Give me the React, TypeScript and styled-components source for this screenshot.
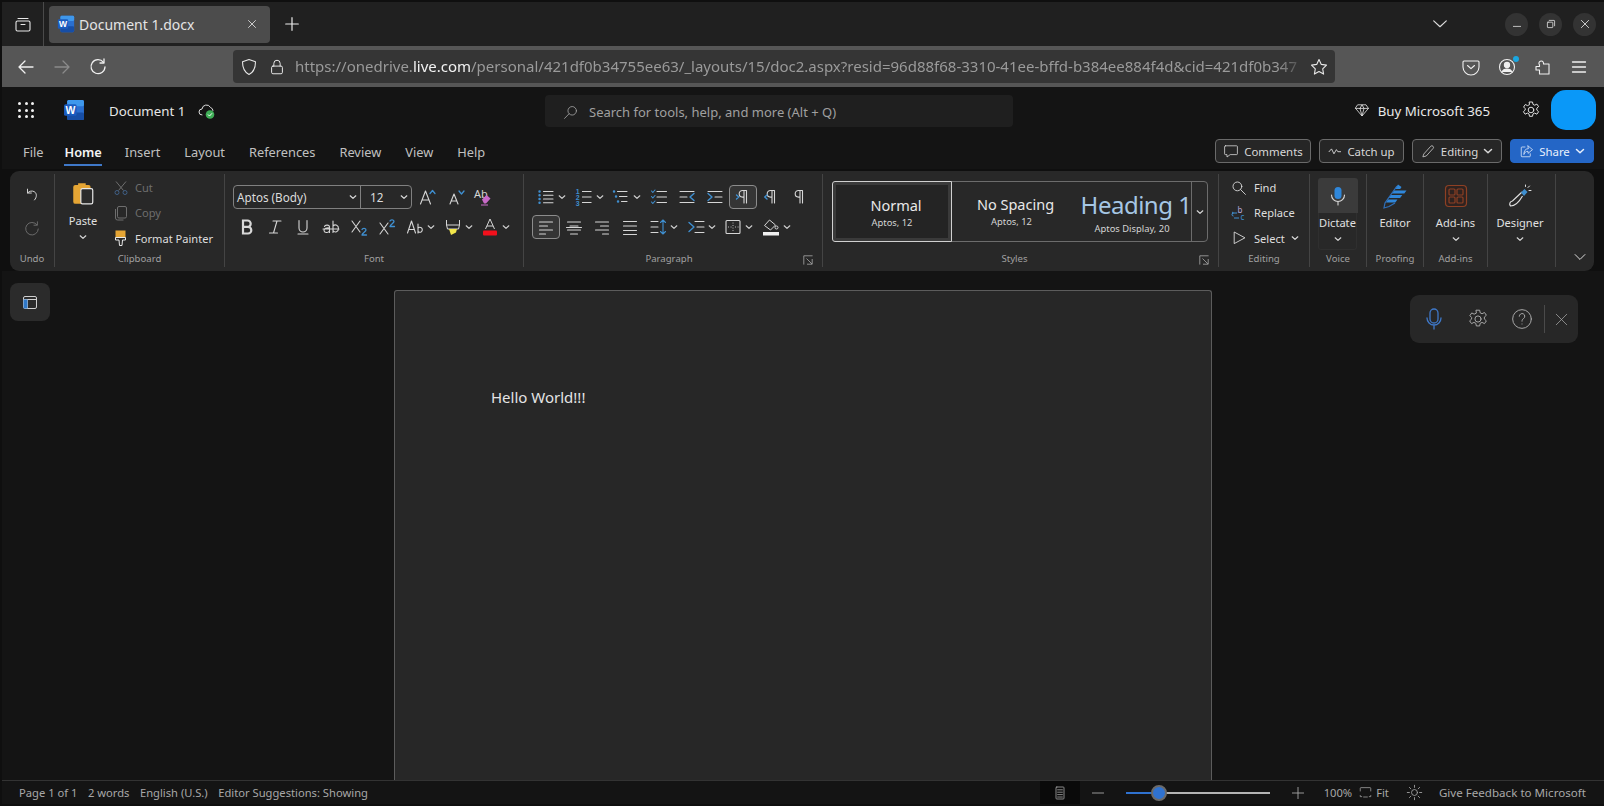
import React from "react";
import styled, { createGlobalStyle } from "styled-components";

const Global = createGlobalStyle`
  html, body { margin: 0; padding: 0; background: #0f0f0f; overflow: hidden; }
  * { box-sizing: border-box; }
  #root { height: 806px; }
`;
const FONT = `"Noto Sans", "Open Sans", sans-serif`;

const Shell = styled.div`
  width: 1604px; height: 806px; padding: 2px 0 2px 2px; background: #0f0f0f;
  display: flex; flex-direction: column; font-family: ${FONT}; color: #d6d6d6; overflow: hidden;
`;
const TabStrip = styled.div`
  height: 44px; background: #202020; display: flex; align-items: center; flex: none;
`;
const TabSideBtn = styled.div`
  width: 42px; height: 44px; border-right: 1px solid #4a4a4a; color: #e8e8e8;
  display: flex; align-items: center; justify-content: center; flex: none;
`;
const Tab = styled.div`
  margin-left: 5px; width: 221px; height: 37px; background: #4c4c4c; border-radius: 4px;
  display: flex; align-items: center; padding: 0 11px 0 8px; gap: 4px; font-size: 14px; color: #e4e4e4;
`;
const TabTitle = styled.span` flex: 1; white-space: nowrap; `;
const NewTab = styled.div`
  margin-left: 11px; width: 22px; height: 22px; color: #eee;
  display: flex; align-items: center; justify-content: center;
`;
const TabStripRight = styled.div`
  margin-left: auto; display: flex; align-items: center; padding-right: 8px; color: #ddd;
`;
const TabListBtn = styled.div` margin-right: 45.5px; display: flex; `;
const WinBtn = styled.div`
  width: 23px; height: 23px; border-radius: 50%; background: #333; margin-left: 11px;
  display: flex; align-items: center; justify-content: center; color: #e6e6e6;
`;
const NavBar = styled.div`
  height: 41px; background: #565656; display: flex; align-items: center; flex: none; color: #eee;
`;
const NavBtn = styled.div<{ $dim?: boolean; $ml: number }>`
  margin-left: ${(p) => p.$ml}px; width: 22px; height: 22px; display: flex; align-items: center; justify-content: center;
  color: ${(p) => (p.$dim ? "#8a8a8a" : "#f0f0f0")}; flex: none;
`;
const UrlBar = styled.div`
  margin-left: 124px; width: 1102px; height: 33px; background: #353535; border-radius: 4px;
  display: flex; align-items: center; padding: 0 4px 0 5px; flex: none;
`;
const UrlIcon = styled.div<{ $w: number }>`
  width: ${(p) => p.$w}px; display: flex; align-items: center; justify-content: center; color: #e8e8e8; flex: none;
`;
const UrlText = styled.div`
  flex: 1; min-width: 0; white-space: nowrap; overflow: hidden; font-size: 15px; color: #9a9a9a; margin: -2px 0 0 1px;
  -webkit-mask-image: linear-gradient(to right, #000 97%, transparent 100%);
  mask-image: linear-gradient(to right, #000 97%, transparent 100%);
`;
const UrlHost = styled.span` color: #f2f2f2; `;
const NavRight = styled.div`
  margin-left: auto; display: flex; align-items: center; padding-right: 14px; gap: 14px;
`;
const NavTool = styled.div`
  width: 22px; height: 22px; display: flex; align-items: center; justify-content: center; color: #f0f0f0; position: relative;
`;
const Dot = styled.span`
  position: absolute; top: 0; right: -1px; width: 6px; height: 6px; border-radius: 50%; background: #1aa6e0;
`;
const AppBar = styled.div`
  height: 46px; background: #141414; display: flex; align-items: center; flex: none;
`;
const Waffle = styled.div`
  margin-left: 16px; width: 16px; height: 16px; display: grid; grid-template-columns: repeat(3, 3px); gap: 3.5px; flex: none;
`;
const WaffleDot = styled.span` width: 3px; height: 3px; border-radius: 50%; background: #f2f2f2; `;
const WordSlot = styled.div` margin-left: 29px; display: flex; flex: none; `;
const DocName = styled.div` margin: 2px 0 0 24px; width: 76px; font-size: 13.3px; color: #e6e6e6; white-space: nowrap; `;
const CloudSlot = styled.div` margin: 2px 0 0 12px; display: flex; width: 20px; flex: none; `;
const SearchBox = styled.div`
  position: relative; margin: 2px 0 0 328px; width: 468px; height: 32px; background: #1f1f1f; border-radius: 4px;
  display: flex; align-items: center; padding: 2px 0 0 17px; gap: 10px; color: #a0a0a0; font-size: 13px; flex: none;
`;
const BuyWrap = styled.div`
  margin-left: auto; display: flex; align-items: center; font-size: 13.3px; color: #e8e8e8; padding-right: 8px;
`;
const BuyLabel = styled.span` margin: 2px 0 0 8px; white-space: nowrap; `;
const GearSlot = styled.div` margin-left: 31px; display: flex; color: #ddd; `;
const Avatar = styled.div`
  margin-left: 10px; width: 45px; height: 40px; border-radius: 15px; background: #0a98f8;
`;
const MenuRow = styled.div`
  height: 36px; margin-bottom: 2px; background: #141414; display: flex; align-items: center; padding: 0 10px 0 21px; flex: none;
`;
const MenuTab = styled.div<{ $active?: boolean; $mr?: number }>`
  position: relative; margin-right: ${(p) => p.$mr ?? 24}px; padding-top: 2px; font-size: 12.8px; white-space: nowrap;
  color: ${(p) => (p.$active ? "#f4f4f4" : "#c0c0c0")}; font-weight: ${(p) => (p.$active ? 600 : 400)};
  ${(p) => p.$active && `&::after { content: ""; position: absolute; left: 0; right: 0; bottom: -5px; height: 2px; background: #3f78c8; }`}
`;
const MenuRight = styled.div` margin-left: auto; display: flex; gap: 8px; `;
const PillBtn = styled.div<{ $w: number; $primary?: boolean }>`
  width: ${(p) => p.$w}px; height: 24px; border-radius: 4px; font-size: 11.4px;
  display: flex; align-items: center; justify-content: center; gap: 5px; white-space: nowrap;
  border: 1px solid ${(p) => (p.$primary ? "#2466c6" : "#6a6a6a")};
  background: ${(p) => (p.$primary ? "#2466c6" : "#262626")}; color: ${(p) => (p.$primary ? "#e8f0fc" : "#d8d8d8")};
`;
const Ribbon = styled.div`
  height: 100px; margin: 0 10px 0 8px; background: #282828; border-radius: 9px; padding: 3px 0 4px;
  display: flex; flex: none;
`;
const Group = styled.div<{ $w: number; $last?: boolean }>`
  width: ${(p) => p.$w}px; height: 93px; flex: none; display: flex; flex-direction: column;
  border-right: ${(p) => (p.$last ? "none" : "1px solid #444")}; position: relative;
`;
const GroupBody = styled.div` flex: 1; min-height: 0; display: flex; `;
const GroupLabel = styled.div<{ $pr?: number }>`
  height: 16px; line-height: 16px; font-size: 9.6px; color: #a0a0a0; text-align: center; white-space: nowrap;
  padding-right: ${(p) => p.$pr ?? 0}px;
`;
const Launcher = styled.div`
  position: absolute; right: 8px; bottom: 1px; display: flex; color: #b8b8b8;
`;
const Stack = styled.div<{ $pl?: number }>`
  display: flex; flex-direction: column; padding-left: ${(p) => p.$pl ?? 0}px; padding-top: 1px;
`;
const UndoCol = styled.div`
  width: 100%; display: flex; flex-direction: column; align-items: center; padding-top: 12px; gap: 16px;
`;
const RedoGlyph = styled.span` color: #6a6a6a; display: flex; `;
const CmdRow = styled.div<{ $dim?: boolean }>`
  height: 26px; display: flex; align-items: center; gap: 6px; font-size: 11.1px; white-space: nowrap;
  color: ${(p) => (p.$dim ? "#6e6e6e" : "#dedede")};
`;
const CmdIcon = styled.span<{ $w: number }>`
  width: ${(p) => p.$w}px; display: flex; justify-content: center; flex: none;
`;
const BigBtn = styled.div<{ $w: number; $frame?: boolean }>`
  width: ${(p) => p.$w}px; display: flex; flex-direction: column; align-items: center; padding-top: 5px; flex: none;
  font-size: 11.1px; color: #e0e0e0; white-space: nowrap; position: relative;
  ${(p) => p.$frame && `&::after { content: ""; position: absolute; left: 8px; right: 8px; top: 39px; height: 36px; border: 1px solid #2f2f2f; border-top: none; border-radius: 0 0 3px 3px; pointer-events: none; }`}
`;
const BigIcon = styled.div<{ $hover?: boolean }>`
  width: 40px; height: 35px; margin-top: -1px; margin-bottom: 1px; border-radius: 3px 3px 0 0; display: flex; align-items: center; justify-content: center;
  background: ${(p) => (p.$hover ? "#3b3b3b" : "transparent")};
`;
const PasteGlyph = styled.svg` margin-top: -5px; `;
const BigLabel = styled.div<{ $mt?: number }>` height: 16px; line-height: 16px; margin-top: ${(p) => p.$mt ?? 1}px; `;
const BigChev = styled.div` height: 12px; margin-top: 2px; display: flex; align-items: center; color: #d8d8d8; `;
const ToolRows = styled.div<{ $pl: number }>`
  padding: 11px 0 0 ${(p) => p.$pl}px; display: flex; flex-direction: column; gap: 6px;
`;
const ToolRow = styled.div` height: 24px; display: flex; align-items: center; `;
const Tool = styled.div<{ $active?: boolean; $w?: number }>`
  width: ${(p) => p.$w ?? 28}px; height: 24px; flex: none; display: flex; align-items: center; justify-content: center;
  border-radius: 4px; color: #d6d6d6;
  ${(p) => p.$active && `border: 1px solid #8c8c8c; background: #353535;`}
`;
const ToolChev = styled.div`
  width: 10px; margin: 0 2.7px 0 -3px; display: flex; justify-content: center; color: #d0d0d0; flex: none;
`;
const FontCombo = styled.div`
  width: 179px; height: 24px; border: 1px solid #808080; border-radius: 4px; display: flex; font-size: 11.7px; color: #dcdcdc; margin-right: 1px; flex: none;
`;
const FontName = styled.div`
  width: 127px; border-right: 1px solid #808080; display: flex; align-items: center; justify-content: space-between; padding: 0 3px 0 3px; white-space: nowrap;
`;
const FontSize = styled.div`
  flex: 1; display: flex; align-items: center; justify-content: space-between; padding: 0 3px 0 9px;
`;
const Gallery = styled.div`
  margin: 7px 0 0 9px; width: 376px; height: 61px; border: 1px solid #6c6c6c; border-radius: 4px; display: flex; flex: none;
`;
const StyleCell = styled.div<{ $w: number; $sel?: boolean; $pt?: number; $pl?: number }>`
  width: ${(p) => p.$w}px; height: ${(p) => (p.$sel ? "61px" : "59px")}; flex: none; display: flex; flex-direction: column; align-items: center;
  padding: ${(p) => p.$pt ?? 12}px 0 0 ${(p) => p.$pl ?? 0}px; white-space: nowrap;
  ${(p) => p.$sel && `margin: -1px 0 0 -1px; border: 1px solid #d0d0d0; border-radius: 3px 0 0 3px; background: #242424; box-shadow: inset 0 0 0 3px #3a3a3a;`}
`;
const StyleName = styled.div<{ $heading?: boolean }>`
  margin-left: 8px; font-size: ${(p) => (p.$heading ? "24px" : "14.5px")}; line-height: ${(p) => (p.$heading ? "32px" : "20px")};
  letter-spacing: ${(p) => (p.$heading ? "-.5px" : "0")};
  color: ${(p) => (p.$heading ? "#a5c6e4" : "#e8e8e8")};
`;
const StyleSub = styled.div` font-size: 9.4px; line-height: 14px; color: #d4d4d4; margin-top: 1px; `;
const GalleryMore = styled.div`
  flex: 1; border-left: 1px solid #6c6c6c; display: flex; align-items: center; justify-content: center; color: #d8d8d8;
`;
const CollapseSlot = styled.div`
  position: absolute; right: 8px; bottom: 3px; display: flex; color: #e0e0e0;
`;
const Workspace = styled.div`
  flex: 1; min-height: 0; background: #141414; display: grid; grid-template-columns: 1fr 818px 1fr; overflow: hidden;
`;
const LeftRail = styled.div` padding: 12px 0 0 8px; `;
const RailBtn = styled.div`
  width: 40px; height: 38px; border-radius: 8px; background: #2b2b2b; display: flex; align-items: center; justify-content: center;
`;
const PageSheet = styled.div`
  margin-top: 19px; background: #272727; border: 1px solid #5c5c5c; border-bottom: none; border-radius: 3px 3px 0 0;
  padding: 95px 96px 0; font-size: 15px; line-height: 22px; color: #e4e4e4;
`;
const RightRail = styled.div` display: flex; justify-content: flex-end; align-items: flex-start; padding: 24px 26px 0 0; `;
const DictBar = styled.div`
  width: 168px; height: 48px; border-radius: 9px; background: #272727; display: flex; align-items: center; padding-left: 10px; color: #a8a8a8;
`;
const DictIcon = styled.div<{ $w: number }>` width: ${(p) => p.$w}px; display: flex; justify-content: center; flex: none; `;
const DictSep = styled.div` width: 1px; height: 28px; background: #4a4a4a; margin: 0 7px 0 1px; flex: none; `;
const StatusBar = styled.div`
  height: 24px; flex: none; background: #141414; border-top: 1px solid #333; display: flex; align-items: center; font-size: 11.2px; color: #a8a8a8; padding-left: 17px; white-space: nowrap;
`;
const StatusItem = styled.span<{ $mr?: number }>` margin-right: ${(p) => p.$mr ?? 10.5}px; `;
const StatusRight = styled.div` margin-left: auto; display: flex; align-items: center; height: 100%; padding-right: 18px; `;
const FeedbackText = styled.span` font-size: 11.6px; `;
const ViewBtn = styled.div`
  width: 40px; height: 100%; background: #0a0a0a; display: flex; align-items: center; justify-content: center; margin-right: 10px;
`;
const ZoomTrack = styled.div`
  position: relative; width: 144px; height: 2px; background: #b4b4b4; margin: 0 20px;
`;
const ZoomFill = styled.div` position: absolute; left: 0; top: 0; height: 2px; width: 33px; background: #2f72d0; `;
const ZoomThumb = styled.div`
  position: absolute; left: 25px; top: -7px; width: 16px; height: 16px; border-radius: 50%; background: #2f72d0; border: 2px solid #6a6a6a;
`;
const StatusIcon = styled.div<{ $mr: number }>` margin-right: ${(p) => p.$mr}px; display: flex; `;

/* --- icons --- */
const S = ({ s = 20, w = 1.1, children }: { s?: number; w?: number; children: React.ReactNode }) => (
  <svg width={s} height={s} viewBox="0 0 20 20" fill="none" stroke="currentColor" strokeWidth={w} strokeLinecap="round" strokeLinejoin="round">
    {children}
  </svg>
);
const BLUE = "#3f8fd0";
const Chev = ({ s = 8 }: { s?: number }) => (
  <svg width={s} height={s} viewBox="0 0 8 8" fill="none" stroke="currentColor" strokeWidth={1.2} strokeLinecap="round" strokeLinejoin="round">
    <path d="M1.2 2.8 4 5.4 6.8 2.8" />
  </svg>
);
const WordLogo = ({ s = 21 }: { s?: number }) => (
  <svg width={s} height={s} viewBox="0 0 21 21">
    <rect x="4" y="1" width="16" height="19" rx="1.5" fill="#2a6fd0" />
    <rect x="4" y="1" width="16" height="6" rx="1.5" fill="#3f98ec" />
    <rect x="4" y="13" width="16" height="7" rx="1.5" fill="#174ea6" />
    <rect x="1" y="5" width="12" height="11" rx="1.5" fill="#1b5cc0" />
    <text x="7" y="14" textAnchor="middle" fontSize="10" fontWeight="700" fill="#fff" fontFamily="Liberation Sans, sans-serif">W</text>
  </svg>
);
const ChevLines = ({ d, blue }: { d: string; blue?: string }) => (
  <S>
    <path d={d} />
    {blue && <path d={blue} stroke={BLUE} strokeWidth={1.4} />}
  </S>
);
const Pilcrow = ({ arrow }: { arrow?: string }) => (
  <S>
    <path d="M13 3.5H9.5a3.2 3.2 0 0 0 0 6.6H11M11 3.5V16M13.5 3.5V16" />
    {arrow && <path d={arrow} stroke={BLUE} strokeWidth={1.4} />}
  </S>
);
const GEAR = "M8.500 2h3l.5 2.400 1.700.8 2.200-1.100 1.700 2.500-1.800 1.600v1.900l1.800 1.600-1.700 2.500-2.200-1.100-1.700.8-.5 2.400h-3l-.5-2.400-1.700-.8-2.200 1.100-1.700-2.500 1.800-1.600V8.600L2.600 7 4.300 4.500l2.200 1.100 1.700-.8z";

export default function App() {
  return (
    <>
      <Global />
      <Shell>
        <TabStrip>
          <TabSideBtn>
            <S>
              <rect x="3" y="7" width="14" height="10" rx="1.5" />
              <path d="M5 4.5h10M8 10.5h4" />
            </S>
          </TabSideBtn>
          <Tab>
            <WordLogo s={18} />
            <TabTitle>Document 1.docx</TabTitle>
            <S s={14} w={1.2}><path d="M5 5l10 10M15 5 5 15" /></S>
          </Tab>
          <NewTab><S s={18} w={1.3}><path d="M10 3v14M3 10h14" /></S></NewTab>
          <TabStripRight>
            <TabListBtn><S s={18} w={1.3}><path d="M3 6.5 10 13l7-6.5" /></S></TabListBtn>
            <WinBtn><S s={12} w={1.3}><path d="M4 14h12" /></S></WinBtn>
            <WinBtn><S s={12} w={1.3}><rect x="4" y="7" width="9" height="9" rx="1" /><path d="M7 4h8a1 1 0 0 1 1 1v8" /></S></WinBtn>
            <WinBtn><S s={12} w={1.4}><path d="M4 4l12 12M16 4 4 16" /></S></WinBtn>
          </TabStripRight>
        </TabStrip>

        <NavBar>
          <NavBtn $ml={13}><S w={1.3}><path d="M17 10H3.500M9 4l-6 6 6 6" /></S></NavBtn>
          <NavBtn $ml={14} $dim><S w={1.3}><path d="M3 10h13.500M11 4l6 6-6 6" /></S></NavBtn>
          <NavBtn $ml={14}><S w={1.3}><path d="M15.500 5.300A7 7 0 1 0 17 10" /><path d="M16 2v4h-4" /></S></NavBtn>
          <UrlBar>
            <UrlIcon $w={22}><S><path d="M10 2.500 3.500 4.800c0 5 1 10 6.500 12.700 5.500-2.700 6.500-7.700 6.500-12.700z" /></S></UrlIcon>
            <UrlIcon $w={34}><S s={18}><rect x="4" y="9" width="12" height="8.500" rx="1.500" /><path d="M6.500 9V6a3.500 3.500 0 0 1 7 0v3" /></S></UrlIcon>
            <UrlText>https://onedrive.<UrlHost>live.com</UrlHost>/personal/421df0b34755ee63/_layouts/15/doc2.aspx?resid=96d88f68-3310-41ee-bffd-b384ee884f4d&amp;cid=421df0b347</UrlText>
            <UrlIcon $w={24}><S><path d="m10 2.500 2.300 4.900 5.200.7-3.800 3.700.9 5.300-4.600-2.600-4.600 2.600.9-5.300-3.800-3.700 5.200-.7z" /></S></UrlIcon>
          </UrlBar>
          <NavRight>
            <NavTool><S><path d="M3 4h14a1 1 0 0 1 1 1v5a8 8 0 0 1-16 0V5a1 1 0 0 1 1-1z" /><path d="m6.500 8.500 3.500 3.200 3.500-3.200" /></S></NavTool>
            <NavTool>
              <S><circle cx="10" cy="10" r="7.500" /><circle cx="10" cy="8" r="2.600" fill="currentColor" /><path d="M5 15c1-2.500 3-3 5-3s4 .5 5 3" fill="currentColor" /></S>
              <Dot />
            </NavTool>
            <NavTool><S><path d="M3 9.500h3.500V7.800A2.300 2.300 0 1 1 10.500 6v1h5.500v10H6.500v-4H3z" /></S></NavTool>
            <NavTool><S w={1.3}><path d="M3.500 5h13M3.500 10h13M3.500 15h13" /></S></NavTool>
          </NavRight>
        </NavBar>

        <AppBar>
          <Waffle>{Array.from({ length: 9 }).map((_, i) => <WaffleDot key={i} />)}</Waffle>
          <WordSlot><WordLogo s={22} /></WordSlot>
          <DocName>Document 1</DocName>
          <CloudSlot>
            <svg width="20" height="20" viewBox="0 0 20 20" fill="none">
              <path d="M5 14a3 3 0 0 1 0-6 4.500 4.500 0 0 1 8.500-1.500A3.500 3.500 0 0 1 16 9.500" stroke="#ddd" strokeWidth="1" strokeLinecap="round" />
              <circle cx="13" cy="13.500" r="4.300" fill="#3fae57" />
              <path d="m11 13.500 1.500 1.500 2.500-2.700" stroke="#fff" strokeWidth="1" />
            </svg>
          </CloudSlot>
          <SearchBox>
            <S s={17} w={1}><circle cx="12" cy="8" r="5" /><path d="M8.300 11.500 3 17" /></S>
            Search for tools, help, and more (Alt + Q)
          </SearchBox>
          <BuyWrap>
            <S s={16} w={1}><path d="M5 3.500h10l3 4.500-8 9.500L2 8zM2 8h16M7.500 8 10 17.500 12.500 8l-2.500-4.500L7.500 8" /></S>
            <BuyLabel>Buy Microsoft 365</BuyLabel>
            <GearSlot><S w={1}><circle cx="10" cy="10" r="2.800" /><path d={GEAR} /></S></GearSlot>
            <Avatar />
          </BuyWrap>
        </AppBar>

        <MenuRow>
          <MenuTab $mr={21}>File</MenuTab>
          <MenuTab $active $mr={23}>Home</MenuTab>
          <MenuTab>Insert</MenuTab>
          <MenuTab>Layout</MenuTab>
          <MenuTab>References</MenuTab>
          <MenuTab>Review</MenuTab>
          <MenuTab>View</MenuTab>
          <MenuTab>Help</MenuTab>
          <MenuRight>
            <PillBtn $w={96}><S s={16} w={1}><path d="M3 3.500h14a1 1 0 0 1 1 1v9a1 1 0 0 1-1 1H9l-4 3v-3H3a1 1 0 0 1-1-1v-9a1 1 0 0 1 1-1z" /></S>Comments</PillBtn>
            <PillBtn $w={85}><S s={14} w={1.3}><path d="M1.500 11 5 7l3.500 7 3.500-6 2 3h4" /></S>Catch up</PillBtn>
            <PillBtn $w={90}><S s={15} w={1}><path d="m4 13 9-10a2 2 0 0 1 3 3L7 16l-4 1z" /></S>Editing <Chev s={10} /></PillBtn>
            <PillBtn $w={84} $primary><S s={15} w={1}><path d="M8 4H4a1 1 0 0 0-1 1v11a1 1 0 0 0 1 1h10a1 1 0 0 0 1-1v-3M12 2.500l6 5-6 5V9.800C9 9.800 7.500 11 6.500 14c0-5 2-7.500 5.500-7.800z" /></S>Share <Chev s={10} /></PillBtn>
          </MenuRight>
        </MenuRow>

        <Ribbon>
          <Group $w={45}>
            <GroupBody>
              <UndoCol>
                <S s={18}><path d="M5 3.500v4.300h4.300" /><path d="M5.200 7.700C7 5.500 10 5 12.500 6.300c3 1.700 3.200 6 .3 9.200" /></S>
                <RedoGlyph>
                  <S s={18}><path d="M15.500 5.300A7 7 0 1 0 17 10" /><path d="M16 2v3.800h-3.800" /></S>
                </RedoGlyph>
              </UndoCol>
            </GroupBody>
            <GroupLabel>Undo</GroupLabel>
          </Group>

          <Group $w={170}>
            <GroupBody>
              <BigBtn $w={56}>
                <BigIcon>
                  <PasteGlyph width="26" height="26" viewBox="0 0 24 24" fill="none">
                    <path d="M3 6.500a2 2 0 0 1 2-2h2.500V3h7v1.500H17a2 2 0 0 1 2 2V8H11v14H5a2 2 0 0 1-2-2z" fill="#e5a534" />
                    <rect x="10" y="8" width="11" height="14" rx="1.500" fill="#2b2b2b" stroke="#e8e8e8" strokeWidth="1.100" />
                  </PasteGlyph>
                </BigIcon>
                <BigLabel $mt={-1}>Paste</BigLabel>
                <BigChev><Chev /></BigChev>
              </BigBtn>
              <Stack $pl={2}>
                <CmdRow $dim>
                  <CmdIcon $w={16}>
                    <svg width="16" height="16" viewBox="0 0 16 16" fill="none" strokeWidth="1">
                      <path d="M3 1.500 10.500 10.500M13 1.500 5.500 10.500" stroke="#6e6e6e" />
                      <circle cx="4" cy="12.500" r="2" stroke="#3f5f86" />
                      <circle cx="12" cy="12.500" r="2" stroke="#3f5f86" />
                    </svg>
                  </CmdIcon>
                  Cut
                </CmdRow>
                <CmdRow $dim>
                  <CmdIcon $w={16}>
                    <svg width="16" height="16" viewBox="0 0 16 16" fill="none" stroke="#6e6e6e">
                      <rect x="4.500" y="1.500" width="9" height="11.500" rx="1.500" />
                      <path d="M2.500 4v9a2 2 0 0 0 2 2h6" />
                    </svg>
                  </CmdIcon>
                  Copy
                </CmdRow>
                <CmdRow>
                  <CmdIcon $w={16}>
                    <svg width="16" height="18" viewBox="0 0 16 18" fill="none">
                      <rect x="2.500" y="1.500" width="10" height="7" fill="#e5a534" />
                      <path d="M2.500 8.500h10v2.500H9.500l-.5 5.500H6.500L6 11H2.500z" stroke="#e8e8e8" strokeWidth="1" />
                    </svg>
                  </CmdIcon>
                  Format Painter
                </CmdRow>
              </Stack>
            </GroupBody>
            <GroupLabel>Clipboard</GroupLabel>
          </Group>

          <Group $w={299}>
            <GroupBody>
              <ToolRows $pl={8}>
                <ToolRow>
                  <FontCombo>
                    <FontName>Aptos (Body)<Chev /></FontName>
                    <FontSize>12<Chev /></FontSize>
                  </FontCombo>
                  <Tool>
                    <S><path d="M3.500 17 8.500 4l5 13M5 13h7" /><path d="m13 6.500 2.500-3 2.500 3" stroke={BLUE} strokeWidth={1.3} /></S>
                  </Tool>
                  <Tool $w={29}>
                    <S><path d="M4 17 8 7l4 10M5.300 14h5.400" /><path d="m13 4 2.500 3L18 4" stroke={BLUE} strokeWidth={1.3} /></S>
                  </Tool>
                  <Tool $w={26}>
                    <svg width="20" height="20" viewBox="0 0 20 20" fill="none">
                      <text x="1" y="11" fontSize="11" fill="#d6d6d6" fontFamily="Noto Sans, sans-serif">Ab</text>
                      <path d="m9 12.500 4.500-4.500 4 3.500-4.500 5H11z" fill="#c86ac8" />
                      <path d="M8 18h7" stroke="#c86ac8" />
                    </svg>
                  </Tool>
                </ToolRow>
                <ToolRow>
                  <Tool><svg width="20" height="20" viewBox="0 0 20 20" fill="none" stroke="#d8d8d8" strokeWidth="2.200"><path d="M6 3.500v13h5a3.300 3.300 0 0 0 0-6.600H6h4.500a3.200 3.200 0 0 0 0-6.400z" /></svg></Tool>
                  <Tool><S><path d="M8 4h8M4.500 16h8M12 4 8.500 16" /></S></Tool>
                  <Tool><S><path d="M6 3.500V11a4 4 0 0 0 8 0V3.500M5 17h10" /></S></Tool>
                  <Tool>
                    <S><path d="M2 12h16M3.500 9.500c.5-1.800 5-2 5 .5v5.500M8.500 11c-3-.5-5.500.5-5.500 2.500s4 3 5.500 .5M12 4v11.500M12 9c2.500-2.500 5.500-.5 5.500 2.500s-3.500 5-5.500 2" /></S>
                  </Tool>
                  <Tool>
                    <S><path d="m3 4 8 11M11 4 3 15" /><path d="M13 12.500c.5-1.500 4-1.500 4 .5 0 1.500-4 3-4 5h4.500" stroke={BLUE} strokeWidth={1.3} /></S>
                  </Tool>
                  <Tool>
                    <S><path d="m3 6 8 11M11 6 3 17" /><path d="M13 4c.5-1.500 4-1.500 4 .5 0 1.500-4 3-4 5h4.500" stroke={BLUE} strokeWidth={1.3} /></S>
                  </Tool>
                  <Tool>
                    <S><path d="M2.500 16 6.500 4l4 12M4 12.500h5" /><path d="M13 7v9M13 11a2.500 2.500 0 1 1 0 3.500" /></S>
                  </Tool>
                  <ToolChev><Chev /></ToolChev>
                  <Tool>
                    <svg width="20" height="20" viewBox="0 0 20 20" fill="none">
                      <path d="M3.500 3v5h13V3M3.500 8l1 4h11l1-4" stroke="#d6d6d6" />
                      <path d="M6 12h8l-1 3.500-5 2.500z" fill="#f2e64a" />
                    </svg>
                  </Tool>
                  <ToolChev><Chev /></ToolChev>
                  <Tool>
                    <svg width="20" height="20" viewBox="0 0 20 20" fill="none">
                      <path d="M5.500 12 10 2l4.500 10M7 9h6" stroke="#d6d6d6" />
                      <rect x="3" y="13.500" width="14" height="5" rx="1" fill="#f2101c" />
                    </svg>
                  </Tool>
                  <ToolChev><Chev /></ToolChev>
                </ToolRow>
              </ToolRows>
            </GroupBody>
            <GroupLabel>Font</GroupLabel>
          </Group>

          <Group $w={299}>
            <GroupBody>
              <ToolRows $pl={8}>
                <ToolRow>
                  <Tool><S><path d="M7.500 4.500H17M7.500 8.300H17M7.500 12H17M7.500 15.700H17" /><path d="M3.500 4.500h.1M3.500 8.300h.1M3.500 12h.1M3.500 15.700h.1" stroke={BLUE} strokeWidth={2.4} /></S></Tool>
                  <ToolChev><Chev /></ToolChev>
                  <Tool>
                    <svg width="20" height="20" viewBox="0 0 20 20" fill="none">
                      <path d="M8 4.500h9.500M8 10h9.500M8 15.500h9.500" stroke="#d6d6d6" />
                      <text x="3.800" y="7" fontSize="7" textAnchor="middle" fontWeight="700" fill={BLUE} fontFamily="Liberation Sans, sans-serif">1</text>
                      <text x="3.800" y="13" fontSize="7" textAnchor="middle" fontWeight="700" fill={BLUE} fontFamily="Liberation Sans, sans-serif">2</text>
                      <text x="3.800" y="19" fontSize="7" textAnchor="middle" fontWeight="700" fill={BLUE} fontFamily="Liberation Sans, sans-serif">3</text>
                    </svg>
                  </Tool>
                  <ToolChev><Chev /></ToolChev>
                  <Tool><S><path d="M6.500 4.500H16M8.500 9.500H16M10.500 14.500H16" /><path d="M3 4.500h.1M5 9.500h.1M7 14.500h.1" stroke={BLUE} strokeWidth={2.4} /></S></Tool>
                  <ToolChev><Chev /></ToolChev>
                  <Tool><S><path d="M8 4.500h9.500M8 10h9.500M8 15.500h9.500" /><path d="m2.500 4 1.300 1.500L6 3M2.500 9.500 3.800 11 6 8.500M2.500 15l1.300 1.500L6 14" stroke={BLUE} /></S></Tool>
                  <Tool><ChevLines d="M3 4.500h14M3 10h7M3 15.500h14" blue="M17 6.500 13 10l4 3.500" /></Tool>
                  <Tool><ChevLines d="M3 4.500h14M10 10h7M3 15.500h14" blue="M3 6.500 7 10l-4 3.500" /></Tool>
                  <Tool $active><Pilcrow arrow="m3.500 8 2.300 2-2.300 2" /></Tool>
                  <Tool><Pilcrow arrow="M6 8 3.700 10 6 12" /></Tool>
                  <Tool><Pilcrow /></Tool>
                </ToolRow>
                <ToolRow>
                  <Tool $active><S><path d="M3.500 5h13M3.500 9h8M3.500 13h13M3.500 17h6" /></S></Tool>
                  <Tool><S><path d="M3.500 5h13M6 9h8M2.500 10.500h15M3.500 13h13M6.500 17h7" /></S></Tool>
                  <Tool><S><path d="M3.500 5h13M8.500 9h8M3.500 13h13M10.500 17h6" /></S></Tool>
                  <Tool><S><path d="M3.500 4.500h13M3.500 9h13M3.500 13.500h13M3.500 17.500h13" /></S></Tool>
                  <Tool><S><path d="M3 4.500h7M3 10h7M3 15.500h7" /><path d="M15 3v14M12.500 5.500 15 3l2.500 2.500M12.500 14.500 15 17l2.500-2.500" stroke={BLUE} /></S></Tool>
                  <ToolChev><Chev /></ToolChev>
                  <Tool><ChevLines d="M9 4.500h9M11 10h7M9 15.500h9" blue="M3 5.500 8 10l-5 4.500" /></Tool>
                  <ToolChev><Chev /></ToolChev>
                  <Tool>
                    <S><rect x="3" y="3.500" width="14" height="13" rx="1" /><path d="M10 6v.1M10 8.500v.1M10 11v.1M10 13.500v.1M5.500 10h.1M8 10h.1M12.500 10h.1M15 10h.1" strokeWidth={.9} /></S>
                  </Tool>
                  <ToolChev><Chev /></ToolChev>
                  <Tool>
                    <svg width="20" height="20" viewBox="0 0 20 20" fill="none">
                      <path d="m3.500 8.500 5-5.500 6 5-5 5z" stroke="#d6d6d6" />
                      <circle cx="15.500" cy="10.500" r="1.500" stroke="#d6d6d6" />
                      <rect x="2" y="15" width="16" height="3.500" fill="#f0f0f0" />
                    </svg>
                  </Tool>
                  <ToolChev><Chev /></ToolChev>
                </ToolRow>
              </ToolRows>
            </GroupBody>
            <GroupLabel $pr={8}>Paragraph</GroupLabel>
            <Launcher><S s={12} w={1.2}><path d="M3 17V3h14M17 9v8H9M8 8l8 8" /></S></Launcher>
          </Group>

          <Group $w={396}>
            <GroupBody>
              <Gallery>
                <StyleCell $w={120} $sel $pt={13}>
                  <StyleName>Normal</StyleName>
                  <StyleSub>Aptos, 12</StyleSub>
                </StyleCell>
                <StyleCell $w={119} $pt={12}>
                  <StyleName>No Spacing</StyleName>
                  <StyleSub>Aptos, 12</StyleSub>
                </StyleCell>
                <StyleCell $w={120} $pt={7} $pl={2}>
                  <StyleName $heading>Heading 1</StyleName>
                  <StyleSub>Aptos Display, 20</StyleSub>
                </StyleCell>
                <GalleryMore><Chev /></GalleryMore>
              </Gallery>
            </GroupBody>
            <GroupLabel $pr={12}>Styles</GroupLabel>
            <Launcher><S s={12} w={1.2}><path d="M3 17V3h14M17 9v8H9M8 8l8 8" /></S></Launcher>
          </Group>

          <Group $w={91}>
            <GroupBody>
              <Stack $pl={11}>
                <CmdRow>
                  <CmdIcon $w={18}><S s={16}><circle cx="8" cy="8" r="5.500" /><path d="m12 12 6 6" /></S></CmdIcon>
                  Find
                </CmdRow>
                <CmdRow>
                  <CmdIcon $w={18}>
                    <svg width="16" height="16" viewBox="0 0 16 16" fill="none">
                      <text x="6.500" y="7.500" fontSize="8" fill="#b7a6d8" fontFamily="Noto Sans, sans-serif">b</text>
                      <text x="9.500" y="14.500" fontSize="8" fill={BLUE} fontFamily="Noto Sans, sans-serif">c</text>
                      <path d="M6 8H2.500a1.500 1.500 0 0 0 0 3M1 7l1.500 1L1 9M3 13h5" stroke={BLUE} />
                    </svg>
                  </CmdIcon>
                  Replace
                </CmdRow>
                <CmdRow>
                  <CmdIcon $w={18}><S s={16}><path d="M4 3v14l13-7z" /></S></CmdIcon>
                  Select <Chev />
                </CmdRow>
              </Stack>
            </GroupBody>
            <GroupLabel>Editing</GroupLabel>
          </Group>

          <Group $w={57}>
            <GroupBody>
              <BigBtn $w={55} $frame>
                <BigIcon $hover>
                  <svg width="22" height="22" viewBox="0 0 22 22" fill="none">
                    <rect x="7.500" y="2" width="7" height="12" rx="3.500" fill="#2f87da" />
                    <path d="M4.500 10a6.500 6.500 0 0 0 13 0M11 16.500V20" stroke="#d8d8d8" strokeWidth="1.100" strokeLinecap="round" />
                  </svg>
                </BigIcon>
                <BigLabel>Dictate</BigLabel>
                <BigChev><Chev /></BigChev>
              </BigBtn>
            </GroupBody>
            <GroupLabel>Voice</GroupLabel>
          </Group>

          <Group $w={57}>
            <GroupBody>
              <BigBtn $w={56}>
                <BigIcon>
                  <svg width="26" height="26" viewBox="0 0 26 26" fill="none">
                    <path d="M16 1.500 19.500 4l-1.300 2H13z" fill="#2f87da" />
                    <path d="M12 7.500h12.500l-2.200 3H9.800zM8.800 12h11.500l-2.200 3H6.800zM6 16.500h9.500l-2.200 3H4z" fill="#2f87da" />
                    <path d="M15 3 3 20l-1 5 5-1.500L13 20" stroke="#2f6fb8" strokeWidth="1.200" />
                  </svg>
                </BigIcon>
                <BigLabel>Editor</BigLabel>
              </BigBtn>
            </GroupBody>
            <GroupLabel>Proofing</GroupLabel>
          </Group>

          <Group $w={64}>
            <GroupBody>
              <BigBtn $w={63}>
                <BigIcon>
                  <svg width="24" height="24" viewBox="0 0 24 24" fill="none" stroke="#8e4024" strokeWidth="1.200">
                    <rect x="1.500" y="1.500" width="21" height="21" rx="3.500" fill="#2f2320" />
                    <rect x="5" y="5" width="6" height="6" rx="1" />
                    <rect x="13" y="5" width="6" height="6" rx="1" />
                    <rect x="5" y="13" width="6" height="6" rx="1" />
                    <rect x="13" y="13" width="6" height="6" rx="1" />
                  </svg>
                </BigIcon>
                <BigLabel>Add-ins</BigLabel>
                <BigChev><Chev /></BigChev>
              </BigBtn>
            </GroupBody>
            <GroupLabel>Add-ins</GroupLabel>
          </Group>

          <Group $w={68}>
            <GroupBody>
              <BigBtn $w={64}>
                <BigIcon>
                  <svg width="24" height="24" viewBox="0 0 24 24" fill="none">
                    <path d="M14 8 4.500 17a3 3 0 0 0-2 5c4 0 7.500-2 12-10" stroke="#e0e0e0" strokeWidth="1.200" />
                    <path d="M13 8.500 16.500 5l3 3-3.500 4z" fill="#3f8fd0" />
                    <path d="M20 3.500 21.500 2M21 6.500h2M17.500 2.500V1" stroke="#e0e0e0" strokeWidth="1" strokeLinecap="round" />
                  </svg>
                </BigIcon>
                <BigLabel>Designer</BigLabel>
                <BigChev><Chev /></BigChev>
              </BigBtn>
            </GroupBody>
            <GroupLabel />
          </Group>

          <Group $w={39} $last>
            <CollapseSlot><S s={14} w={1.4}><path d="m3 6.500 7 7 7-7" /></S></CollapseSlot>
          </Group>
        </Ribbon>

        <Workspace>
          <LeftRail>
            <RailBtn>
              <svg width="16" height="16" viewBox="0 0 16 16" fill="none" stroke="#cfcfcf">
                <rect x="1.500" y="2.500" width="13" height="12" rx="1.500" />
                <path d="M1.500 5.500h13M5.500 5.500v9" />
                <rect x="1.500" y="5.500" width="4" height="9" fill="#2f78c8" stroke="none" />
              </svg>
            </RailBtn>
          </LeftRail>
          <PageSheet>Hello World!!!</PageSheet>
          <RightRail>
            <DictBar>
              <DictIcon $w={28}>
                <svg width="20" height="24" viewBox="0 0 20 24" fill="none" stroke="#3f78c8" strokeWidth="1.300" strokeLinecap="round">
                  <rect x="6" y="2" width="8" height="14" rx="4" />
                  <path d="M3 11a7 7 0 0 0 14 0M10 18v4" />
                </svg>
              </DictIcon>
              <DictIcon $w={60}>
                <S s={22} w={.9}><circle cx="10" cy="10" r="2.800" /><path d={GEAR} /></S>
              </DictIcon>
              <DictIcon $w={28}>
                <S s={22} w={.9}><circle cx="10" cy="10" r="8.500" /><path d="M7.500 7.500a2.500 2.500 0 1 1 4 2c-1 .7-1.500 1.300-1.500 2.500M10 14.500v.1" /></S>
              </DictIcon>
              <DictIcon $w={7} />
              <DictSep />
              <DictIcon $w={18}><S s={15} w={1}><path d="M3 3l14 14M17 3 3 17" /></S></DictIcon>
            </DictBar>
          </RightRail>
        </Workspace>

        <StatusBar>
          <StatusItem>Page 1 of 1</StatusItem>
          <StatusItem>2 words</StatusItem>
          <StatusItem>English (U.S.)</StatusItem>
          <StatusItem>Editor Suggestions: Showing</StatusItem>
          <StatusRight>
            <ViewBtn>
              <S s={16} w={1}><rect x="5" y="2.500" width="10" height="15" rx="1" /><path d="M7 6h6M7 9h6M7 12h6M7 15h6" /></S>
            </ViewBtn>
            <StatusIcon $mr={0}><S s={16} w={1.1}><path d="M3 10h14" /></S></StatusIcon>
            <ZoomTrack><ZoomFill /><ZoomThumb /></ZoomTrack>
            <StatusIcon $mr={18}><S s={16} w={1.1}><path d="M3 10h14M10 3v14" /></S></StatusIcon>
            <StatusItem $mr={6}>100%</StatusItem>
            <StatusIcon $mr={3}><S s={15} w={1}><path d="M3 8V4.500a1 1 0 0 1 1-1h12a1 1 0 0 1 1 1V8M3 14v1.500h2M17 14v1.500h-2M7.500 16h5" /></S></StatusIcon>
            <StatusItem $mr={17}>Fit</StatusItem>
            <StatusIcon $mr={16}><S s={17} w={1}><circle cx="10" cy="10" r="3.500" /><path d="M10 1.500V4M10 16v2.500M1.500 10H4M16 10h2.500M4 4l1.700 1.700M14.300 14.300 16 16M4 16l1.700-1.700M14.300 5.700 16 4" /></S></StatusIcon>
            <FeedbackText>Give Feedback to Microsoft</FeedbackText>
          </StatusRight>
        </StatusBar>
      </Shell>
    </>
  );
}
